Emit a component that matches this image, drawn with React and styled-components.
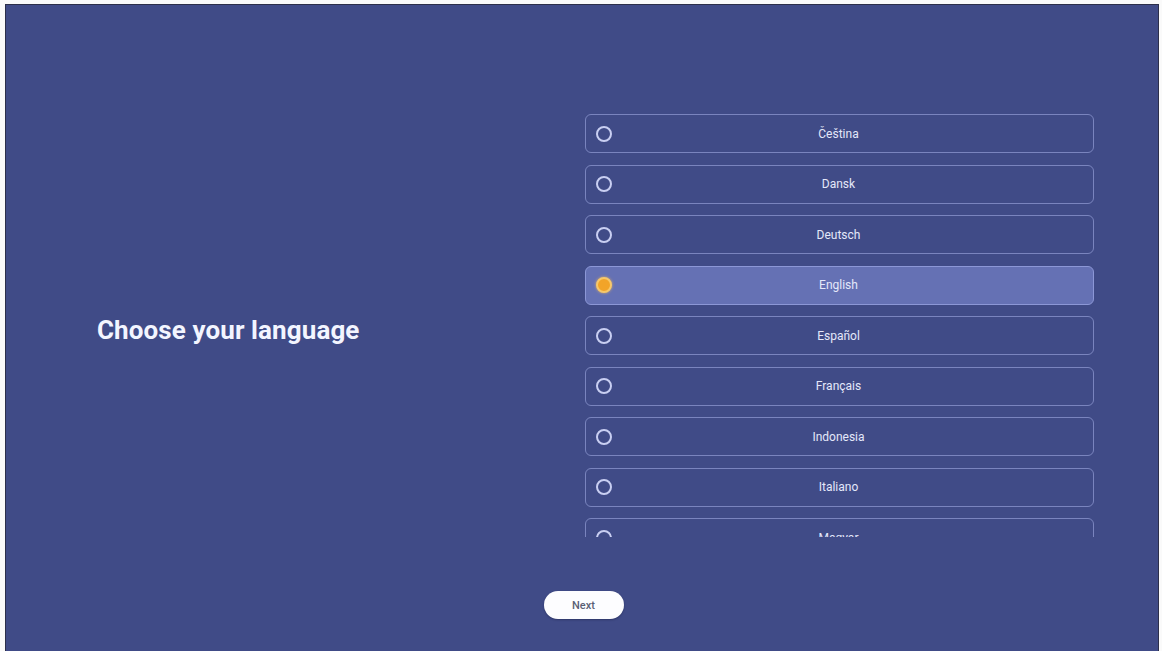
import React, { useState } from 'react';
import styled, { createGlobalStyle } from 'styled-components';

const GlobalStyle = createGlobalStyle`
  html, body {
    margin: 0;
    padding: 0;
    background: #fafafa;
  }
  body {
    font-family: Roboto, "Noto Sans", "Liberation Sans", sans-serif;
  }
`

const Frame = styled.div`
  width: 1162px;
  height: 651px;
  padding: 4px 3px 0 5px;
  box-sizing: border-box;
  overflow: hidden;
`

const Screen = styled.main`
  height: 100%;
  background: #404b87;
  border-top: 1px solid #2c2f4a;
  border-left: 1px solid #2c2f4a;
  border-right: 1px solid #2c2f4a;
  box-sizing: border-box;
  display: flex;
  flex-direction: column;
`

const Body = styled.section`
  display: flex;
  padding-top: 109px;
`

const Intro = styled.div`
  flex: 1;
  display: flex;
  align-items: center;
  padding-left: 91px;

  h1 {
    margin: 8px 0 0;
    font-size: 26px;
    font-weight: 700;
    color: #f3f5ff;
    letter-spacing: 0.1px;
  }
`

const LanguageList = styled.ul`
  list-style: none;
  margin: 0 64px 0 0;
  padding: 0;
  width: 509px;
  height: 423px;
  overflow: hidden;
  display: flex;
  flex-direction: column;
  gap: 11.5px;
`

const Option = styled.li`
  flex: none;
  height: 39px;
  box-sizing: border-box;
  border-radius: 6px;
  border: 1.5px solid ${p => (p.$active ? '#8c97d6' : 'rgba(170, 180, 235, 0.55)')};
  background: ${p => (p.$active ? '#6571b4' : 'transparent')};
  display: flex;
  align-items: center;
  position: relative;
  cursor: pointer;
`

const Radio = styled.span`
  position: absolute;
  left: 10px;
  top: 50%;
  transform: translateY(-50%);
  width: 16px;
  height: 16px;
  box-sizing: border-box;
  border-radius: 50%;
  border: 2px solid ${p => (p.$active ? '#f7c86a' : '#c9cff2')};
  background: ${p => (p.$active ? '#f2a428' : 'transparent')};
  box-shadow: ${p => (p.$active ? '0 0 3px rgba(247, 190, 90, 0.8)' : 'none')};
`

const Label = styled.span`
  flex: 1;
  text-align: center;
  font-size: 12px;
  font-weight: 400;
  color: #e4e8fa;
  padding-right: 2px;
`

const Footer = styled.footer`
  flex: 1;
  display: flex;
  justify-content: center;
  padding-top: 54px;
`

const NextButton = styled.button`
  width: 80px;
  height: 28px;
  border: none;
  border-radius: 14px;
  background: #fdfdff;
  color: #5a5f75;
  font-family: inherit;
  font-size: 11px;
  font-weight: 500;
  margin-left: 3px;
  box-shadow: 0 1px 2px rgba(20, 25, 60, 0.4);
  cursor: pointer;
`

const languages = [
  'Čeština',
  'Dansk',
  'Deutsch',
  'English',
  'Español',
  'Français',
  'Indonesia',
  'Italiano',
  'Magyar',
]

const App = () => {
  const [selected, setSelected] = useState('English');

  return (
    <>
      <GlobalStyle />
      <Frame>
        <Screen>
          <Body>
            <Intro>
              <h1>Choose your language</h1>
            </Intro>
            <LanguageList>
              {languages.map(lang => (
                <Option key={lang} $active={lang === selected} onClick={() => setSelected(lang)}>
                  <Radio $active={lang === selected} />
                  <Label>{lang}</Label>
                </Option>
              ))}
            </LanguageList>
          </Body>
          <Footer>
            <NextButton type="button">Next</NextButton>
          </Footer>
        </Screen>
      </Frame>
    </>
  )
}

export default App;
